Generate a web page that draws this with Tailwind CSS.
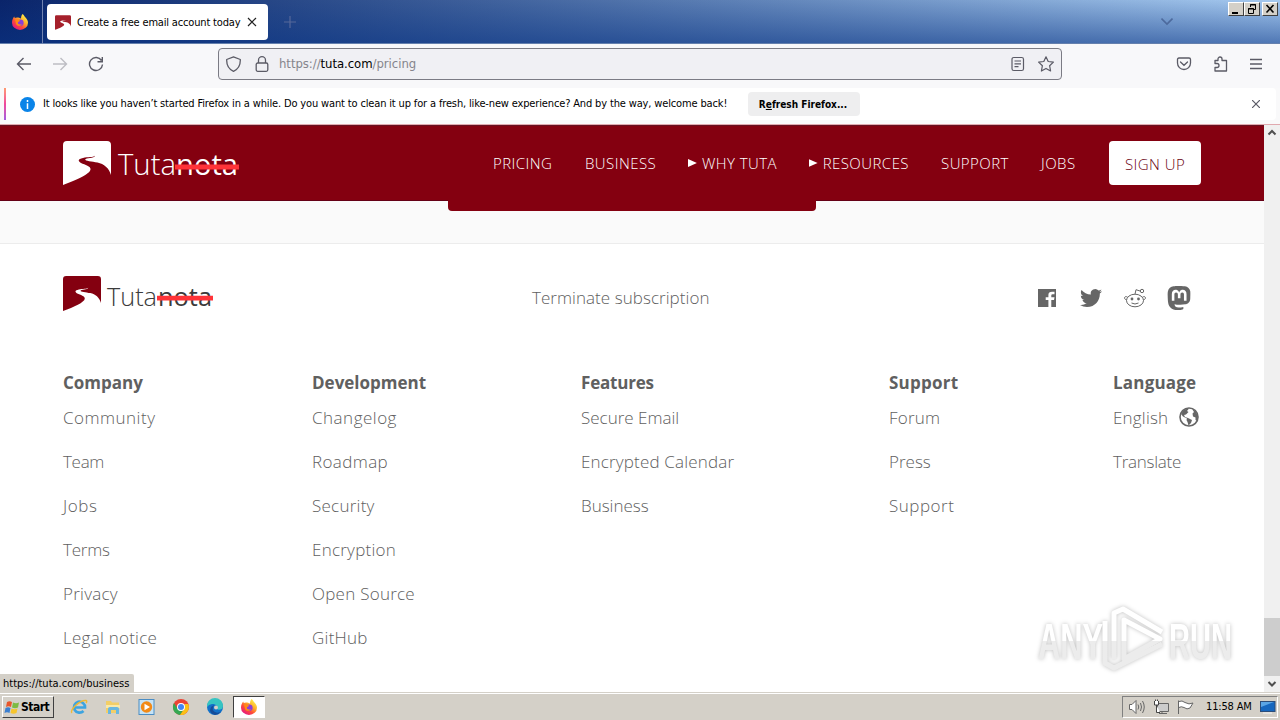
<!DOCTYPE html>
<html lang="en">
<head>
    <meta charset="UTF-8">
    <meta name="viewport" content="width=device-width, initial-scale=1.0">
    <title>Create a free email account today</title>
    <script src="https://cdn.jsdelivr.net/npm/@tailwindcss/browser@4"></script>
</head>
<body class="w-[1280px] h-[720px] overflow-hidden bg-white font-['DejaVu_Sans_Condensed','DejaVu_Sans',sans-serif] text-[11px] text-black">
    <!-- Shared icons -->
    <svg class="absolute size-0">
        <defs>
            <symbol id="road" viewBox="0 0 48 44">
                <path d="M0 44V4a4 4 0 0 1 4-4H44a4 4 0 0 1 4 4V34C46 27 41 23 34.500 21.500C29 20.300 22 20 22.200 18.400C22.500 17 31.500 17.700 32 14.800C30 16.500 25 15.800 20 17C14.500 18.300 15 20 18 22C22 24 28 25 27.500 28.500C27 33 14 39 0 44Z"/>
            </symbol>
            <linearGradient id="ffOuter" x1="0.850" y1="0.100" x2="0.200" y2="0.950">
                <stop offset="0" stop-color="#fff04a"/>
                <stop offset="0.350" stop-color="#ffb02a"/>
                <stop offset="0.650" stop-color="#ff4b38"/>
                <stop offset="1" stop-color="#e31587"/>
            </linearGradient>
            <symbol id="firefox" viewBox="0 0 16 16">
                <path d="M10.500 0C12 1 12.500 2.500 13.500 3.500C15 5 16 6.700 16 8.700A8 7.300 0 0 1 0 8.700C0 6 1 4 2.200 2.500L2.800 4L5 3.500C6.500 3.500 8 4 9 4.500C9 3 9.500 1 10.500 0Z" fill="url(#ffOuter)"/>
                <circle cx="8.300" cy="8.700" r="3.300" fill="#8b3fd9"/>
                <path d="M3 5.500C5 4.500 6.500 5 8 6.500C7.500 7.800 6 7.500 5.800 8.800C6 10.500 8 11 10 10C9 12.500 5 12.500 4 10Z" fill="#ff8a16"/>
            </symbol>
        </defs>
    </svg>

    <!-- Tab bar -->
    <div class="relative flex h-[44px] bg-linear-to-r from-[#0a246a] to-[#a6caf0]">
        <div class="absolute inset-0 bg-linear-to-b from-transparent to-[#0a3585]/55 border-b border-[#6580ad]"></div>
        <div class="relative flex w-[43px] items-center border-r border-[#7183b0] pl-3">
            <svg class="size-4"><use href="#firefox"/></svg>
        </div>
        <div class="relative mt-1 ml-1 flex h-9 w-[221px] items-center rounded bg-white pl-2">
            <svg class="h-[15px] w-4 fill-[#a5202b]"><use href="#road"/></svg>
            <span class="ml-[6px] w-[164px] pt-[2px] whitespace-nowrap tracking-[-0.17px]">Create a free email account today</span>
            <svg class="ml-[6px] size-[10px]" viewBox="0 0 10 10" stroke="#222" stroke-width="1.200"><path d="M1 1L9 9M9 1L1 9"/></svg>
        </div>
        <svg class="relative mt-4 ml-4 size-3" viewBox="0 0 12 12" stroke="#56689a" stroke-width="1.200"><path d="M6 0V12M0 6H12"/></svg>
        <svg class="relative mt-[17px] ml-auto h-[9px] w-3" viewBox="0 0 12 9" fill="none" stroke="#4d6a9d" stroke-width="1.600"><path d="M0.500 1.500L6 7L11.500 1.500"/></svg>
        <div class="relative mt-[2px] mr-[2px] ml-[55px] flex h-[14px]">
            <div class="w-4 border border-t-white border-l-white border-r-[#404040] border-b-[#404040] bg-[#d4d0c8]"><svg class="size-full" viewBox="0 0 14 12"><path d="M3 9H9V11H3Z"/></svg></div>
            <div class="w-4 border border-t-white border-l-white border-r-[#404040] border-b-[#404040] bg-[#d4d0c8]"><svg class="size-full" viewBox="0 0 14 12" fill="none" stroke="#000"><path d="M5.500 4V1.500H10.500V6.500H8.500M5 2H11M3.500 5.500H8.500V10.500H3.500ZM3 6H9"/></svg></div>
            <div class="ml-[2px] w-4 border border-t-white border-l-white border-r-[#404040] border-b-[#404040] bg-[#d4d0c8]"><svg class="size-full" viewBox="0 0 14 12" stroke="#000" stroke-width="1.600"><path d="M3.500 2L10.500 9.500M10.500 2L3.500 9.500"/></svg></div>
        </div>
    </div>

    <!-- Toolbar -->
    <div class="flex h-[44px] items-center bg-[#f8f8fa] pb-1 text-[#5b5b66]">
        <svg class="ml-4 h-4 w-[88px]" viewBox="0 0 88 16" fill="none" stroke="currentColor" stroke-width="1.400">
            <path d="M15 8H2M7.500 2L1.500 8L7.500 14"/>
            <path d="M37 8H50M44.500 2L50.500 8L44.500 14" stroke="#bdbdc3"/>
            <path d="M85.500 4.500A6.500 6.500 0 1 0 86.500 8.500M86.300 1V5.700H81.500"/>
        </svg>
        <div class="ml-[114px] flex h-8 w-[844px] items-center rounded border border-[#7b7b84] bg-[#f0f0f4] pl-[7px]">
            <svg class="size-4" viewBox="0 0 16 16" fill="none" stroke="currentColor" stroke-width="1.300"><path d="M7.500 0.800L14.300 3.500C14.500 8.500 13 13 7.500 15.300C2 13 0.500 8.500 0.700 3.500Z" stroke-linejoin="round"/></svg>
            <svg class="ml-3 size-4" viewBox="0 0 16 16" fill="none" stroke="currentColor" stroke-width="1.300"><rect x="2.200" y="7" width="11.600" height="8.300" rx="1.500"/><path d="M4.500 7V4.200a3.500 3.500 0 0 1 7 0V7"/></svg>
            <span class="ml-[9px] text-[13px] tracking-[-0.05px] text-[#85858c]">https://<span class="text-black">tuta.com</span>/pricing</span>
            <svg class="ml-auto size-4" viewBox="0 0 16 16" fill="none" stroke="currentColor" stroke-width="1.200"><rect x="2" y="1.500" width="11.500" height="13" rx="1.800"/><path d="M4.500 5H11M4.500 7.800H11M4.500 10.600H8.500"/></svg>
            <svg class="mr-[7px] ml-3 size-4" viewBox="0 0 16 16" fill="none" stroke="currentColor" stroke-width="1.200" stroke-linejoin="round"><path d="M8 0.800L10.200 5.500L15.400 6.100L11.600 9.700L12.600 15L8 12.400L3.400 15L4.400 9.700L0.600 6.100L5.800 5.500Z"/></svg>
        </div>
        <svg class="ml-[114px] h-4 w-[88px]" viewBox="0 0 88 16" fill="none" stroke="currentColor" stroke-width="1.300">
            <path d="M3 2H13Q14.500 2 14.500 3.500V7A6.500 6.500 0 0 1 1.500 7V3.500Q1.500 2 3 2ZM4.500 6L8 9.300L11.500 6" stroke-linecap="round"/>
            <path d="M39 4.500H42V3A2 2 0 0 1 46 3V4.500H50.500V15H39V11.500H41A2 2 0 0 0 41 7.500H39Z" stroke-linejoin="round"/>
            <path d="M74 3.500H86M74 8H86M74 12.500H86"/>
        </svg>
    </div>

    <!-- Notification bar -->
    <div class="flex h-[37px] flex-col border-b border-[#e0a9af] bg-[#f9f9fa]">
        <div class="mx-[4px] flex h-8 items-center rounded-r bg-white">
            <div class="h-8 w-[2px] bg-linear-to-b from-[#ff9a70] via-[#f0479b] to-[#a35be0]"></div>
            <svg class="ml-[14px] size-[15px]" viewBox="0 0 15 15"><circle cx="7.500" cy="7.500" r="7.500" fill="#0a84e8"/><path d="M7.500 3V5M7.500 6.300V12" stroke="#fff" stroke-width="1.500"/></svg>
            <span class="ml-2 w-[705px] whitespace-nowrap tracking-[-0.147px]">It looks like you haven’t started Firefox in a while. Do you want to clean it up for a fresh, like-new experience? And by the way, welcome back!</span>
            <div class="flex h-6 w-28 items-center justify-center rounded bg-[#eeeeef] pr-[2px] text-[10px] font-bold whitespace-nowrap"><span>R<span class="underline">e</span>fresh Firefox...</span></div>
            <svg class="mr-4 ml-auto size-2" viewBox="0 0 8 8" stroke="#5b5b66" stroke-width="1.200"><path d="M0 0L8 8M8 0L0 8"/></svg>
        </div>
    </div>

    <!-- Page -->
    <div class="relative flex h-[567px] font-['Open_Sans','Noto_Sans',sans-serif]">
        <div class="w-[1264px]">
            <header class="flex h-[76px] items-center border-t border-b border-t-[#651020] border-b-[#650016] bg-[#840010] pl-[63px] text-[15px] font-light text-white">
                <svg class="h-11 w-[178px] overflow-visible" viewBox="0 0 178 44">
                    <use href="#road" width="48" height="44" fill="#fff"/>
                    <g fill="#fff" font-size="30">
                        <text x="55" y="34" font-weight="300" textLength="58" lengthAdjust="spacingAndGlyphs">Tuta</text>
                        <text x="113" y="34" font-weight="500" textLength="62" lengthAdjust="spacingAndGlyphs">nota</text>
                    </g>
                    <path d="M112 23.500H176V28.500H112Z" fill="#ff3338"/>
                </svg>
                <nav class="ml-[252px] flex items-center gap-8 whitespace-nowrap tracking-[0.45px]">
                    <a class="w-[60px]">PRICING</a>
                    <a class="w-[71px]">BUSINESS</a>
                    <a class="flex w-[89px] items-center gap-[5px]"><svg class="h-2 w-[9px] fill-white" viewBox="0 0 9 8"><path d="M0 0L9 4L0 8Z"/></svg>WHY TUTA</a>
                    <a class="flex w-[100px] items-center gap-[5px]"><svg class="h-2 w-[9px] fill-white" viewBox="0 0 9 8"><path d="M0 0L9 4L0 8Z"/></svg>RESOURCES</a>
                    <a class="w-[68px]">SUPPORT</a>
                    <a class="w-[36px]">JOBS</a>
                    <a class="flex h-11 w-[92px] items-center justify-center rounded bg-white pt-[2px] text-[#6a0010]">SIGN UP</a>
                </nav>
            </header>
            <div class="h-[43px] border-b border-[#ececec] bg-[#fafafa]">
                <div class="relative -top-px ml-[448px] h-[11px] w-[368px] rounded-b bg-[#840010]"></div>
            </div>

            <footer class="pl-[63px] text-[17px] font-light text-[#606060]">
                <div class="flex h-[108px] items-center">
                    <svg class="mb-[9px] h-[35px] w-[152px] overflow-visible" viewBox="0 0 152 35">
                        <use href="#road" width="38" height="35" fill="#840010"/>
                        <g fill="#3b3b3b" font-size="26">
                            <text x="44" y="29.500" font-weight="300" textLength="50" lengthAdjust="spacingAndGlyphs">Tuta</text>
                            <text x="95" y="29.500" font-weight="500" textLength="54" lengthAdjust="spacingAndGlyphs">nota</text>
                        </g>
                        <path d="M94 19.800H150V24.600H94Z" fill="#ff3338"/>
                    </svg>
                    <a class="ml-[317px] w-[505px] tracking-[0.05px]">Terminate subscription</a>
                    <svg class="h-6 w-[154px]" viewBox="0 0 154 24" fill="#666">
                        <path fill-rule="evenodd" d="M1 3H19V21H14.300V14H17L17.500 11.300H14.300V9.500Q14.300 8.300 15.600 8.300H17.500V5.700H15Q11.400 5.700 11.400 9V11.300H8.700V14H11.400V21H1Z"/>
                        <path transform="translate(43 1) scale(0.920)" d="M23.953 4.570a10 10 0 01-2.825.775 4.958 4.958 0 002.163-2.723c-.951.555-2.005.959-3.127 1.184a4.920 4.920 0 00-8.384 4.482C7.690 8.095 4.067 6.130 1.640 3.162a4.822 4.822 0 00-.666 2.475c0 1.710.870 3.213 2.188 4.096a4.904 4.904 0 01-2.228-.616v.060a4.923 4.923 0 003.946 4.827 4.996 4.996 0 01-2.212.085 4.936 4.936 0 004.604 3.417 9.867 9.867 0 01-6.102 2.105c-.390 0-.779-.023-1.170-.067a13.995 13.995 0 007.557 2.209c9.053 0 13.998-7.496 13.998-13.985 0-.210 0-.420-.015-.630A9.935 9.935 0 0024 4.590z"/>
                        <g fill="none" stroke="#666">
                            <ellipse cx="98" cy="14.500" rx="8.500" ry="6.300"/>
                            <path d="M90.500 11C87 9.500 86.500 13 89.500 14M105.500 11C109 9.500 109.500 13 106.500 14M98 8.200L99 3.700L103 5M94.500 17Q98 19 101.500 17"/>
                            <circle cx="105" cy="5" r="1.700"/>
                        </g>
                        <circle cx="95" cy="13" r="1.400"/><circle cx="101.500" cy="13" r="1.400"/>
                        <path transform="translate(130 0) scale(1 1.010)" d="M23.268 5.313c-.350-2.578-2.617-4.610-5.304-5.004C17.510.242 15.792 0 11.813 0h-.030c-3.980 0-4.835.242-5.288.309C3.882.692 1.496 2.518.917 5.127.640 6.412.610 7.837.661 9.143c.074 1.874.088 3.745.260 5.611.118 1.240.325 2.470.620 3.680.550 2.237 2.777 4.098 4.960 4.857 2.336.792 4.849.923 7.256.380.265-.061.527-.132.786-.213.585-.184 1.270-.390 1.774-.753a.057.057 0 0 0 .023-.043v-1.809a.052.052 0 0 0-.020-.041.053.053 0 0 0-.046-.010 20.282 20.282 0 0 1-4.709.545c-2.730 0-3.463-1.284-3.674-1.818a5.593 5.593 0 0 1-.319-1.433.053.053 0 0 1 .066-.054c1.517.363 3.072.546 4.632.546.376 0 .750 0 1.125-.010 1.570-.044 3.224-.124 4.768-.422.038-.008.077-.015.110-.024 2.435-.464 4.753-1.920 4.989-5.604.008-.145.030-1.520.030-1.670.002-.512.167-3.630-.024-5.545zm-3.748 9.195h-2.561V8.290c0-1.309-.550-1.976-1.670-1.976-1.230 0-1.846.790-1.846 2.350v3.403h-2.546V8.663c0-1.560-.617-2.350-1.848-2.350-1.112 0-1.668.668-1.670 1.977v6.218H4.822V8.102c0-1.310.337-2.350 1.011-3.120.696-.770 1.608-1.164 2.740-1.164 1.311 0 2.302.500 2.962 1.498l.638 1.060.638-1.060c.660-.999 1.650-1.498 2.960-1.498 1.130 0 2.043.395 2.740 1.164.675.770 1.012 1.810 1.012 3.120z"/>
                    </svg>
                </div>
                <div class="mt-[18px] grid grid-cols-[249px_269px_308px_224px_auto] whitespace-nowrap">
                    <div>
                        <h4 class="h-[26px] leading-[26px] font-bold">Company</h4>
                        <ul class="leading-[44px] tracking-[0.25px]"><li class="tracking-[0.5px]">Community</li><li class="tracking-[-0.3px]">Team</li><li class="tracking-[0.6px]">Jobs</li><li class="tracking-[-0.2px]">Terms</li><li>Privacy</li><li>Legal notice</li></ul>
                    </div>
                    <div>
                        <h4 class="h-[26px] leading-[26px] font-bold">Development</h4>
                        <ul class="leading-[44px] tracking-[0.25px]"><li class="tracking-[0.5px]">Changelog</li><li class="tracking-[0.4px]">Roadmap</li><li>Security</li><li>Encryption</li><li>Open Source</li><li>GitHub</li></ul>
                    </div>
                    <div>
                        <h4 class="h-[26px] leading-[26px] font-bold tracking-[-0.2px]">Features</h4>
                        <ul class="leading-[44px]"><li>Secure Email</li><li class="tracking-[0.17px]">Encrypted Calendar</li><li>Business</li></ul>
                    </div>
                    <div>
                        <h4 class="h-[26px] leading-[26px] font-bold tracking-[0.25px]">Support</h4>
                        <ul class="leading-[44px]"><li class="tracking-[0.2px]">Forum</li><li>Press</li><li class="tracking-[0.5px]">Support</li></ul>
                    </div>
                    <div>
                        <h4 class="h-[26px] leading-[26px] font-bold tracking-[0.2px]">Language</h4>
                        <ul class="leading-[44px]">
                            <li class="flex items-center"><span class="w-[66px] tracking-[0.2px]">English</span>
                                <svg class="-mt-[2px] size-5" viewBox="0 0 20 20" fill="#666"><circle cx="10" cy="10" r="9" fill="none" stroke="#666" stroke-width="1.600"/><path d="M2 7L5 2.500L10 1.500L8 4L9.500 5L7 7.500L5 8L6 10L9 11L13 13L12 16L9.500 18.500L8.500 15L7.500 13L8 11.500L4 9.500ZM13 2L17 4.500L19 9.500L18 14L16.500 13L16.500 10.500L14 9.500L13.500 6.500L15 5Z"/></svg>
                            </li>
                            <li class="tracking-[-0.25px]">Translate</li>
                        </ul>
                    </div>
                </div>
            </footer>
        </div>

        <!-- Scrollbar -->
        <div class="flex w-4 flex-col items-center bg-[#f0f0f0]">
            <svg class="h-4 w-4" viewBox="0 0 16 16" fill="none" stroke="#505050" stroke-width="2"><path d="M4.500 9.500L8 6L11.500 9.500"/></svg>
            <div class="mt-[477px] h-[58px] w-full bg-[#cdcdcd]"></div>
            <svg class="h-4 w-4" viewBox="0 0 16 16" fill="none" stroke="#505050" stroke-width="2"><path d="M4.500 6L8 9.500L11.500 6"/></svg>
        </div>

        <!-- Link status -->
        <div class="absolute bottom-0 left-0 h-[18px] w-[134px] rounded-tr-[2px] bg-[#d4d0c8] pl-[3px] font-['DejaVu_Sans_Condensed','DejaVu_Sans',sans-serif] text-[11px] leading-[20px]">https://tuta.com/business</div>

        <!-- Watermark -->
        <svg class="absolute top-[480px] left-[1030px] h-[72px] w-[210px] overflow-visible drop-shadow-[0_0_2px_#00000040]" viewBox="0 0 210 72">
            <defs>
                <linearGradient id="mark" gradientUnits="userSpaceOnUse" x1="0" y1="0" x2="0" y2="72">
                    <stop offset="0.500" stop-color="#fff"/>
                    <stop offset="0.500" stop-color="#ececec"/>
                </linearGradient>
            </defs>
            <g fill="url(#mark)" font-family="Liberation Sans" font-weight="700" font-size="50">
                <text x="8" y="54" textLength="65" lengthAdjust="spacingAndGlyphs">ANY</text>
                <text x="139" y="54" textLength="63" lengthAdjust="spacingAndGlyphs">RUN</text>
            </g>
            <g fill="none" stroke="url(#mark)" stroke-width="5" stroke-linejoin="round">
                <path d="M84 54V8L93 4L132 27"/>
                <path d="M94 50V15L130 34L94 54Z"/>
                <path d="M75 16V58L84 63L132 39"/>
            </g>
        </svg>
    </div>

    <!-- Taskbar -->
    <div class="flex h-7 items-center border-t border-[#d4d0c8] bg-[#d4d0c8] pt-px shadow-[inset_0_1px_0_#fff]">
        <div class="ml-[2px] flex h-[22px] w-[52px] items-center border border-t-white border-l-white border-r-[#404040] border-b-[#404040] pl-px text-[12px] font-bold tracking-[-0.5px]">
            <svg class="mr-px size-4 shrink-0" viewBox="0 0 16 16"><path d="M3 3Q5.500 1.500 8 3L7 8Q4.500 6.500 2 8Z" fill="#e8562a"/><path d="M9 3.500Q12 5 15 3.500L14 8.500Q11 10 8 8.500Z" fill="#7dbb42"/><path d="M1.500 9Q4 7.500 6.500 9L5.500 14Q3 12.500 0.500 14Z" fill="#3b7fd0"/><path d="M7.500 9.500Q10.500 11 13.500 9.500L12.500 14Q9.500 15.500 6.500 14Z" fill="#f6c52d"/></svg>
            Start
        </div>
        <svg class="ml-4 h-[18px] w-[156px]" viewBox="0 0 156 18">
            <g fill="none" stroke="#3da4e0">
                <path d="M4 9.500H15A5.500 5.500 0 1 0 13.500 13" stroke-width="2.700"/>
                <path d="M2 15C-1 13 9 2 16 2.500Q17.500 3 16 5" stroke="#efb934" stroke-width="1.400"/>
            </g>
            <path d="M36 3H41L42 4.500H49V15H36Z" fill="#f2ce67"/><path d="M36 7H50V10H36Z" fill="#fae9a8"/><path d="M38 16V11Q38 9 40 9H47Q49 9 49 11V16H46V12H41V16Z" fill="#69b7e0"/>
            <rect x="69" y="1.500" width="15" height="15" fill="#c6e3f6" stroke="#4b8dc4"/><circle cx="76.500" cy="9" r="5.700" fill="#f28a17"/><path d="M74.500 5.800L80 9L74.500 12.200Z" fill="#fff"/>
            <circle cx="111" cy="9" r="8" fill="#eb4335"/><path d="M104 5A8 8 0 0 0 110 17L114.500 10.500H107.500Z" fill="#34a853"/><path d="M118.300 6A8 8 0 0 1 110 17L114.500 10.500V6Z" fill="#fbc116"/><circle cx="111" cy="9" r="4" fill="#fff"/><circle cx="111" cy="9" r="3" fill="#4285f4"/>
            <circle cx="145" cy="9" r="8" fill="#1271c9"/><path d="M137 8A8 8 0 0 1 153 8C153 12 148 12.500 147 11C149 8 145 5.500 142 6Q138.500 6.500 137 9Z" fill="#36c4c1"/><path d="M144 7Q141 12 145 14Q148 15.500 151 13.500A8 8 0 0 1 145 17Q138 15 141 9Z" fill="#164c98"/><circle cx="146" cy="9.500" r="2" fill="#d4d0c8"/>
        </svg>
        <div class="ml-[7px] flex h-[22px] w-8 items-center justify-center border border-t-[#404040] border-l-[#404040] border-r-white border-b-white bg-white"><svg class="size-4"><use href="#firefox"/></svg></div>
        <div class="mr-[2px] ml-auto flex h-[22px] w-[156px] items-center border border-t-[#808080] border-l-[#808080] border-r-white border-b-white">
            <svg class="ml-[6px] h-4 w-[66px]" viewBox="0 0 66 16" fill="#fff" stroke="#666">
                <path d="M0.500 5.500H3L7 1.500V14.500L3 10.500H0.500Z"/><path d="M9 5.500Q10.500 8 9 10.500M11.500 4Q13.500 8 11.500 12M13.500 2Q17 8 13.500 14" fill="none"/>
                <path d="M28.500 4.500H39.500V12.500H28.500ZM30 14.500H38M33 12.500V14.500" fill="#ccc"/><path d="M25.500 2V6H29.500V2M27.500 6V13.500H31M26.500 0.500V2M28.500 0.500V2" stroke="#444"/>
                <path d="M49.500 15V1.500M50 2.500Q53 1 56 3.500Q60 6 64 4L61 9Q58 11 55 8.500Q52 7 50 8.500" />
            </svg>
            <span class="ml-[11px] w-[54px] whitespace-nowrap tracking-[-0.15px]">11:58 AM</span>
            <svg class="h-[13px] w-4" viewBox="0 0 16 13"><rect x="0.500" y="0.500" width="14.500" height="10" fill="#1767be" stroke="#2d4d79"/><path d="M1 1H14L1 6Z" fill="#5ba5e5"/><path d="M3 12H12" stroke="#f4f4f4"/></svg>
        </div>
    </div>
</body>
</html>
